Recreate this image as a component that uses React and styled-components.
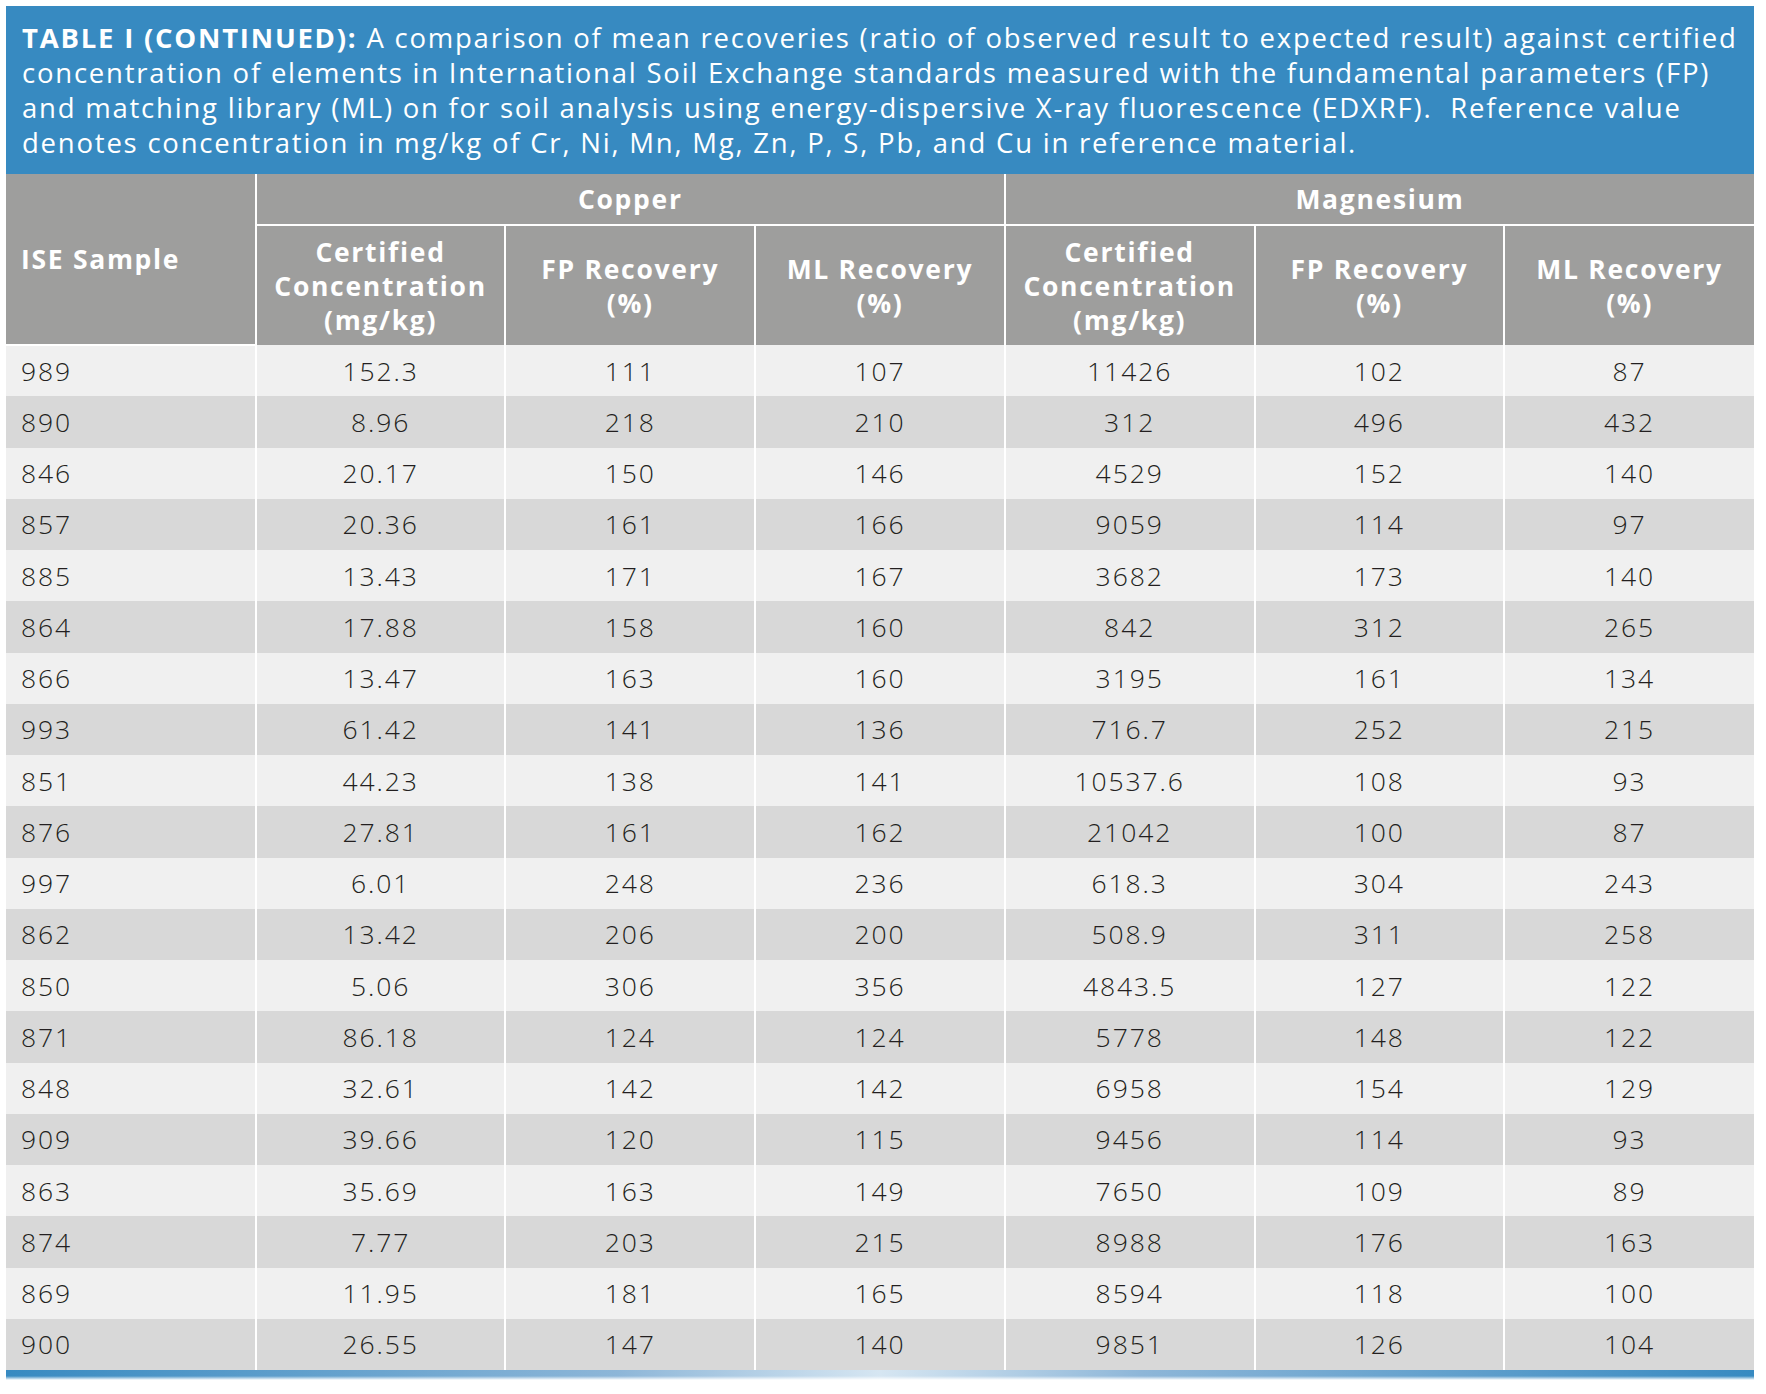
import styled, { createGlobalStyle } from "styled-components";

const GlobalStyle = createGlobalStyle`
  html, body {
    margin: 0;
    padding: 0;
    background: #fff;
  }
`;

const rows = [
  ["989", "152.3", "111", "107", "11426", "102", "87"],
  ["890", "8.96", "218", "210", "312", "496", "432"],
  ["846", "20.17", "150", "146", "4529", "152", "140"],
  ["857", "20.36", "161", "166", "9059", "114", "97"],
  ["885", "13.43", "171", "167", "3682", "173", "140"],
  ["864", "17.88", "158", "160", "842", "312", "265"],
  ["866", "13.47", "163", "160", "3195", "161", "134"],
  ["993", "61.42", "141", "136", "716.7", "252", "215"],
  ["851", "44.23", "138", "141", "10537.6", "108", "93"],
  ["876", "27.81", "161", "162", "21042", "100", "87"],
  ["997", "6.01", "248", "236", "618.3", "304", "243"],
  ["862", "13.42", "206", "200", "508.9", "311", "258"],
  ["850", "5.06", "306", "356", "4843.5", "127", "122"],
  ["871", "86.18", "124", "124", "5778", "148", "122"],
  ["848", "32.61", "142", "142", "6958", "154", "129"],
  ["909", "39.66", "120", "115", "9456", "114", "93"],
  ["863", "35.69", "163", "149", "7650", "109", "89"],
  ["874", "7.77", "203", "215", "8988", "176", "163"],
  ["869", "11.95", "181", "165", "8594", "118", "100"],
  ["900", "26.55", "147", "140", "9851", "126", "104"],
];

const subHeads = [
  ["Certified", "Concentration", "(mg/kg)"],
  ["FP Recovery", "(%)"],
  ["ML Recovery", "(%)"],
];

export default function App() {
  return (
    <Page>
      <GlobalStyle />
      <Frame>
        <Caption>
          <b>TABLE I (CONTINUED):</b> A comparison of mean recoveries (ratio of observed result to expected result) against certified
          <br />
          concentration of elements in International Soil Exchange standards measured with the fundamental parameters (FP)
          <br />
          and matching library (ML) on for soil analysis using energy-dispersive X-ray fluorescence (EDXRF).{"\u00a0 "}Reference value
          <br />
          denotes concentration in mg/kg of Cr, Ni, Mn, Mg, Zn, P, S, Pb, and Cu in reference material.
        </Caption>
        <Table>
          <colgroup>
            {Array.from({ length: 7 }).map((_, i) => (
              <col key={i} style={{ width: `${100 / 7}%` }} />
            ))}
          </colgroup>
          <thead>
            <GroupRow>
              <HeadCell rowSpan={2} $left>ISE Sample</HeadCell>
              <HeadCell colSpan={3}>Copper</HeadCell>
              <HeadCell colSpan={3}>Magnesium</HeadCell>
            </GroupRow>
            <SubRow>
              {[0, 1].map((g) =>
                subHeads.map((lines, i) => (
                  <HeadCell key={`${g}-${i}`}>
                    {lines.map((l, j) => (
                      <div key={j}>{l}</div>
                    ))}
                  </HeadCell>
                ))
              )}
            </SubRow>
          </thead>
          <tbody>
            {rows.map((r, i) => (
              <DataRow key={r[0] + i} $dark={i % 2 === 1}>
                {r.map((v, j) => (
                  <Cell key={j} $left={j === 0}>
                    {v}
                  </Cell>
                ))}
              </DataRow>
            ))}
          </tbody>
        </Table>
        <BottomBar />
      </Frame>
    </Page>
  );
}

const Page = styled.div`
  padding: 6px 0 0 6px;
  width: 1760px;
  height: 1388px;
  background: #fff;
`;

const Frame = styled.div`
  width: 1748px;
`;

const Caption = styled.div`
  background: #378ac1;
  color: #fff;
  font-family: "Open Sans", "Liberation Sans", sans-serif;
  font-size: 27.5px;
  letter-spacing: 1.78px;
  line-height: 35px;
  height: 168px;
  box-sizing: border-box;
  padding: 14px 0 0 16px;
  white-space: nowrap;
  overflow: hidden;
  b {
    font-weight: 700;
  }
`;

const Table = styled.table`
  width: 1748px;
  border-collapse: collapse;
  table-layout: fixed;
  font-family: "Open Sans", "Liberation Sans", sans-serif;
`;

const GroupRow = styled.tr`
  height: 51px;
`;

const SubRow = styled.tr`
  height: 120px;
`;

const HeadCell = styled.th`
  background: #9e9e9d;
  color: #fff;
  font-weight: 700;
  font-size: 26.5px;
  letter-spacing: 1.7px;
  line-height: 34px;
  padding: 0 ${(p) => (p.$left ? "15px" : "2px")};
  text-align: ${(p) => (p.$left ? "left" : "center")};
  vertical-align: middle;
  white-space: nowrap;
  border: 2px solid #fff;
  border-top: none;
  &:first-child {
    border-left: none;
  }
  &:last-child {
    border-right: none;
  }
  tr:last-child > & {
    border-bottom: none;
  }
`;

const DataRow = styled.tr`
  height: 51.25px;
  background: ${(p) => (p.$dark ? "#d8d8d8" : "#f0f0f0")};
`;

const Cell = styled.td`
  color: #231f20;
  font-size: 26.5px;
  font-weight: 300;
  letter-spacing: 1.9px;
  padding: 0 ${(p) => (p.$left ? "15px" : "4px")};
  text-align: ${(p) => (p.$left ? "left" : "center")};
  vertical-align: middle;
  border-left: 2px solid #fff;
  &:first-child {
    border-left: none;
  }
`;

const BottomBar = styled.div`
  height: 10px;
  background: linear-gradient(
    to right,
    #378ac1 0%,
    #8db6d8 35%,
    #d6e6f2 50%,
    #8db6d8 65%,
    #378ac1 100%
  );
  -webkit-mask-image: linear-gradient(to bottom, #000 60%, transparent 100%);
  mask-image: linear-gradient(to bottom, #000 60%, transparent 100%);
`;
